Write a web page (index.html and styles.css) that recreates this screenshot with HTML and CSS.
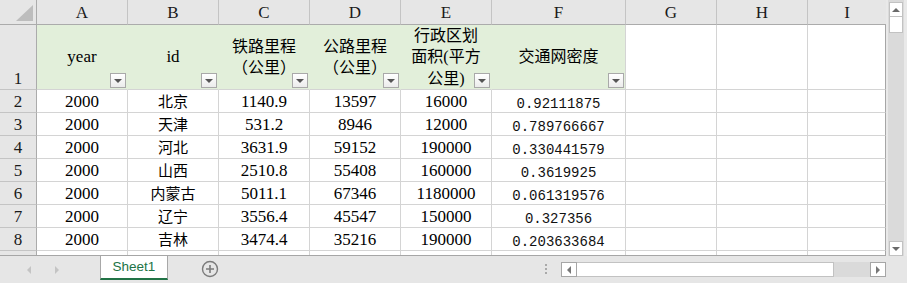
FILE: index.html
```html
<!DOCTYPE html>
<html lang="zh-CN">
<head>
    <meta charset="UTF-8">
    <title>Sheet1</title>
    <link rel="stylesheet" href="styles.css">
</head>
<body>
<div class="app">
    <div class="main">
        <div class="sheet">
            <!-- column letters -->
            <div class="corner"><span class="corner-tri"></span></div>
            <div class="col-head">A</div>
            <div class="col-head">B</div>
            <div class="col-head">C</div>
            <div class="col-head">D</div>
            <div class="col-head">E</div>
            <div class="col-head">F</div>
            <div class="col-head">G</div>
            <div class="col-head">H</div>
            <div class="col-head last">I</div>

            <!-- row 1: titles -->
            <div class="row-head">1</div>
            <div class="head serif">year<span class="filter"></span></div>
            <div class="head serif">id<span class="filter"></span></div>
            <div class="head cjk">铁路里程<br>（公里）<span class="filter"></span></div>
            <div class="head cjk">公路里程<br>（公里）<span class="filter"></span></div>
            <div class="head cjk">行政区划<br>面积(平方<br>公里)<span class="filter"></span></div>
            <div class="head cjk head-end">交通网密度<span class="filter"></span></div>
            <div class="cell"></div>
            <div class="cell"></div>
            <div class="cell last"></div>

            <div class="row-head">2</div>
            <div class="cell serif">2000</div>
            <div class="cell cjk">北京</div>
            <div class="cell serif">1140.9</div>
            <div class="cell serif">13597</div>
            <div class="cell serif">16000</div>
            <div class="cell mono">0.92111875</div>
            <div class="cell"></div>
            <div class="cell"></div>
            <div class="cell last"></div>

            <div class="row-head">3</div>
            <div class="cell serif">2000</div>
            <div class="cell cjk">天津</div>
            <div class="cell serif">531.2</div>
            <div class="cell serif">8946</div>
            <div class="cell serif">12000</div>
            <div class="cell mono">0.789766667</div>
            <div class="cell"></div>
            <div class="cell"></div>
            <div class="cell last"></div>

            <div class="row-head">4</div>
            <div class="cell serif">2000</div>
            <div class="cell cjk">河北</div>
            <div class="cell serif">3631.9</div>
            <div class="cell serif">59152</div>
            <div class="cell serif">190000</div>
            <div class="cell mono">0.330441579</div>
            <div class="cell"></div>
            <div class="cell"></div>
            <div class="cell last"></div>

            <div class="row-head">5</div>
            <div class="cell serif">2000</div>
            <div class="cell cjk">山西</div>
            <div class="cell serif">2510.8</div>
            <div class="cell serif">55408</div>
            <div class="cell serif">160000</div>
            <div class="cell mono">0.3619925</div>
            <div class="cell"></div>
            <div class="cell"></div>
            <div class="cell last"></div>

            <div class="row-head">6</div>
            <div class="cell serif">2000</div>
            <div class="cell cjk">内蒙古</div>
            <div class="cell serif">5011.1</div>
            <div class="cell serif">67346</div>
            <div class="cell serif">1180000</div>
            <div class="cell mono">0.061319576</div>
            <div class="cell"></div>
            <div class="cell"></div>
            <div class="cell last"></div>

            <div class="row-head">7</div>
            <div class="cell serif">2000</div>
            <div class="cell cjk">辽宁</div>
            <div class="cell serif">3556.4</div>
            <div class="cell serif">45547</div>
            <div class="cell serif">150000</div>
            <div class="cell mono">0.327356</div>
            <div class="cell"></div>
            <div class="cell"></div>
            <div class="cell last"></div>

            <div class="row-head">8</div>
            <div class="cell serif">2000</div>
            <div class="cell cjk">吉林</div>
            <div class="cell serif">3474.4</div>
            <div class="cell serif">35216</div>
            <div class="cell serif">190000</div>
            <div class="cell mono">0.203633684</div>
            <div class="cell"></div>
            <div class="cell"></div>
            <div class="cell last"></div>

            <!-- row 9 is only a sliver under the visible area -->
            <div class="row-head"></div>
            <div class="cell"></div>
            <div class="cell"></div>
            <div class="cell"></div>
            <div class="cell"></div>
            <div class="cell"></div>
            <div class="cell"></div>
            <div class="cell"></div>
            <div class="cell"></div>
            <div class="cell last"></div>
        </div>

        <div class="vscroll">
            <div class="vtrack">
                <div class="sbtn"><span class="tri-up"></span></div>
                <div class="vthumb"></div>
                <div class="vspace"></div>
                <div class="sbtn"><span class="tri-down"></span></div>
            </div>
        </div>
    </div>

    <div class="tabbar">
        <div class="nav">
            <span class="nav-left"></span>
            <span class="nav-right"></span>
        </div>
        <div class="tab">Sheet1</div>
        <div class="add">
            <svg width="18" height="18" viewBox="0 0 18 18">
                <circle cx="9" cy="9" r="7.5" fill="none" stroke="#7b7b7b" stroke-width="1.4"/>
                <path d="M9 5v8M5 9h8" stroke="#7b7b7b" stroke-width="1.6"/>
            </svg>
        </div>
        <div class="spacer"></div>
        <div class="dots"><i></i><i></i><i></i></div>
        <div class="hscroll">
            <div class="hbtn"><span class="tri-left"></span></div>
            <div class="hthumb"></div>
            <div class="hspace"></div>
            <div class="hbtn"><span class="tri-right"></span></div>
        </div>
    </div>
</div>
</body>
</html>
```

FILE: styles.css
```css
body {
    margin: 0;
    overflow: hidden;
    background-color: #e6e6e6;
}

.app {
    width: 907px;
    height: 283px;
    display: flex;
    flex-direction: column;
}

.main {
    display: flex;
    height: 256px;
}

.sheet {
    width: 886px;
    height: 256px;
    box-sizing: border-box;
    border-bottom: 1px solid #a6a6a6;
    overflow: hidden;
    background-color: #ffffff;
    display: grid;
    grid-template-columns: 37px repeat(5, 91px) 134px 91px 91px 78px;
    grid-template-rows: 25px 65px repeat(8, 23px);
    color: #000000;
}

.sheet > div {
    box-sizing: border-box;
    border-right: 1px solid #d4d4d4;
    border-bottom: 1px solid #d4d4d4;
}

.corner {
    background-color: #e6e6e6;
    position: relative;
    border-right-color: #ababab !important;
    border-bottom-color: #ababab !important;
}

.corner-tri {
    position: absolute;
    right: 3px;
    bottom: 3px;
    width: 0;
    height: 0;
    border-left: 17px solid transparent;
    border-bottom: 16px solid #bdbdbd;
}

.col-head {
    background-color: #e6e6e6;
    border-right-color: #c4c4c4 !important;
    border-bottom-color: #ababab !important;
    font-family: "Liberation Serif", serif;
    font-size: 17px;
    line-height: 24px;
    padding-top: 1px;
    text-align: center;
    color: #1a1a1a;
}

.col-head.last {
    border-right: none !important;
}

.row-head {
    background-color: #e6e6e6;
    border-right-color: #ababab !important;
    border-bottom-color: #c4c4c4 !important;
    font-family: "Liberation Serif", serif;
    font-size: 17px;
    line-height: 20px;
    display: flex;
    align-items: flex-end;
    justify-content: center;
    color: #1a1a1a;
}

.head {
    background-color: #e2efda;
    border-right-color: #e2efda !important;
    position: relative;
    display: flex;
    align-items: center;
    justify-content: center;
    text-align: center;
}

.head.head-end {
    border-right-color: #d4d4d4 !important;
}

.head.cjk {
    line-height: 21.5px;
    font-size: 16px;
}

.filter {
    position: absolute;
    right: 1px;
    bottom: 1px;
    width: 16px;
    height: 15px;
    box-sizing: border-box;
    border: 1px solid #a9a9a9;
    background: linear-gradient(#ffffff, #ececec);
}

.filter::after {
    content: "";
    position: absolute;
    left: 3px;
    top: 5px;
    border-left: 4px solid transparent;
    border-right: 4px solid transparent;
    border-top: 4px solid #555555;
}

.cell {
    display: flex;
    align-items: flex-end;
    justify-content: center;
    white-space: nowrap;
}

.cell.last {
    border-right-color: #a6a6a6 !important;
}

.serif {
    font-family: "Liberation Serif", serif;
    font-size: 17px;
    line-height: 20px;
}

.cjk {
    font-family: "Liberation Serif", "Noto Sans CJK SC", sans-serif;
    font-size: 15px;
    line-height: 20px;
}

.mono {
    font-family: "Liberation Mono", monospace;
    font-size: 14px;
    line-height: 16px;
    color: #111111;
}

/* vertical scrollbar */
.vscroll {
    width: 21px;
    background-color: #e9e9e9;
    display: flex;
}

.vtrack {
    width: 16px;
    margin: 0 3px 0 2px;
    background-color: #dadada;
    display: flex;
    flex-direction: column;
    padding-top: 2px;
    box-sizing: border-box;
}

.sbtn {
    height: 15px;
    margin: 0 1px;
    box-sizing: border-box;
    border: 1px solid #c2c2c2;
    background-color: #ffffff;
    display: flex;
    align-items: center;
    justify-content: center;
}

.vthumb {
    height: 16px;
    margin: 0 1px;
    box-sizing: border-box;
    border: 1px solid #c2c2c2;
    border-top: none;
    background-color: #ffffff;
}

.vspace {
    flex: 1;
}

.tri-up {
    border-left: 4px solid transparent;
    border-right: 4px solid transparent;
    border-bottom: 4px solid #6a6a6a;
}

.tri-down {
    border-left: 4px solid transparent;
    border-right: 4px solid transparent;
    border-top: 4px solid #6a6a6a;
}

/* sheet tabs */
.tabbar {
    flex: 1;
    display: flex;
    background-color: #e6e6e6;
}

.nav {
    width: 100px;
    display: flex;
    align-items: center;
    padding-left: 27px;
    gap: 24px;
    box-sizing: border-box;
}

.nav-left {
    border-top: 4px solid transparent;
    border-bottom: 4px solid transparent;
    border-right: 4px solid #c4c4c4;
}

.nav-right {
    border-top: 4px solid transparent;
    border-bottom: 4px solid transparent;
    border-left: 4px solid #c4c4c4;
}

.tab {
    width: 68px;
    height: 24px;
    box-sizing: border-box;
    background-color: #ffffff;
    border-left: 1px solid #a8a8a8;
    border-right: 1px solid #a8a8a8;
    border-bottom: 2px solid #217346;
    color: #217346;
    font-family: "Liberation Sans", Arial, sans-serif;
    font-size: 13.5px;
    line-height: 22px;
    text-align: center;
}

.add {
    margin-left: 33px;
    display: flex;
    align-items: center;
    padding-bottom: 2px;
}

.spacer {
    flex: 1;
}

.dots {
    display: flex;
    flex-direction: column;
    gap: 2px;
    padding-top: 8px;
    margin-right: 14px;
}

.dots i {
    display: block;
    width: 2px;
    height: 2px;
    background-color: #a9a9a9;
}

.hscroll {
    width: 325px;
    height: 15px;
    margin-top: 6px;
    margin-right: 21px;
    background-color: #dadada;
    display: flex;
}

.hbtn {
    width: 16px;
    box-sizing: border-box;
    border: 1px solid #a6a6a6;
    background-color: #ffffff;
    display: flex;
    align-items: center;
    justify-content: center;
}

.hthumb {
    width: 257px;
    box-sizing: border-box;
    border: 1px solid #c2c2c2;
    border-left: none;
    background-color: #ffffff;
}

.hspace {
    flex: 1;
}

.tri-left {
    border-top: 4px solid transparent;
    border-bottom: 4px solid transparent;
    border-right: 4px solid #777777;
}

.tri-right {
    border-top: 4px solid transparent;
    border-bottom: 4px solid transparent;
    border-left: 4px solid #777777;
}
```
